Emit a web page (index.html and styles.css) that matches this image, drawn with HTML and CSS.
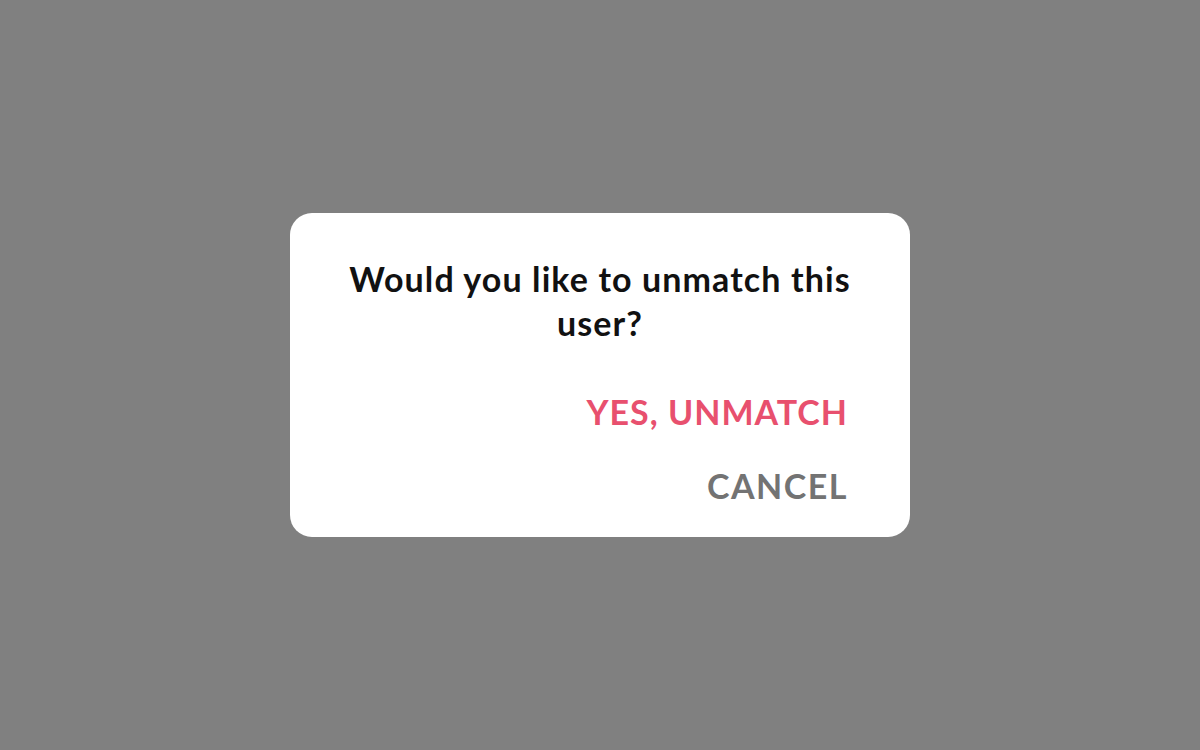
FILE: index.html
```html
<!DOCTYPE html>
<html lang="en">

<head>
    <meta charset="utf-8">
    <title>Unmatch</title>
    <link rel="stylesheet" href="styles.css">
</head>

<body>
    <div class="overlay">
        <div class="dialog">
            <p class="question">Would you like to unmatch this user?</p>
            <div class="actions">
                <button class="action confirm">YES, UNMATCH</button>
                <button class="action cancel">CANCEL</button>
            </div>
        </div>
    </div>
</body>

</html>
```

FILE: styles.css
```css
* {
    padding: 0;
    margin: 0;
    box-sizing: border-box;
}

body {
    background-color: #808080;
    font-family: Lato, "Liberation Sans", sans-serif;
}

.overlay {
    height: 750px;
    display: flex;
    align-items: center;
    justify-content: center;
}

.dialog {
    width: 620px;
    height: 324px;
    background-color: #ffffff;
    border-radius: 22px;
    padding: 44px 40px 0 40px;
}

.question {
    font-size: 34px;
    font-weight: 700;
    line-height: 44px;
    letter-spacing: 1.1px;
    color: #111111;
    text-align: center;
}

.actions {
    display: flex;
    flex-direction: column;
    align-items: flex-end;
    gap: 30px;
    margin-top: 45px;
    padding-right: 22px;
}

.action {
    font-family: inherit;
    font-size: 34px;
    font-weight: 700;
    background: none;
    border: none;
    line-height: 44px;
    letter-spacing: 1px;
    cursor: pointer;
}

.confirm {
    color: #e8506e;
}

.cancel {
    color: #737373;
    letter-spacing: 1.5px;
}
```
